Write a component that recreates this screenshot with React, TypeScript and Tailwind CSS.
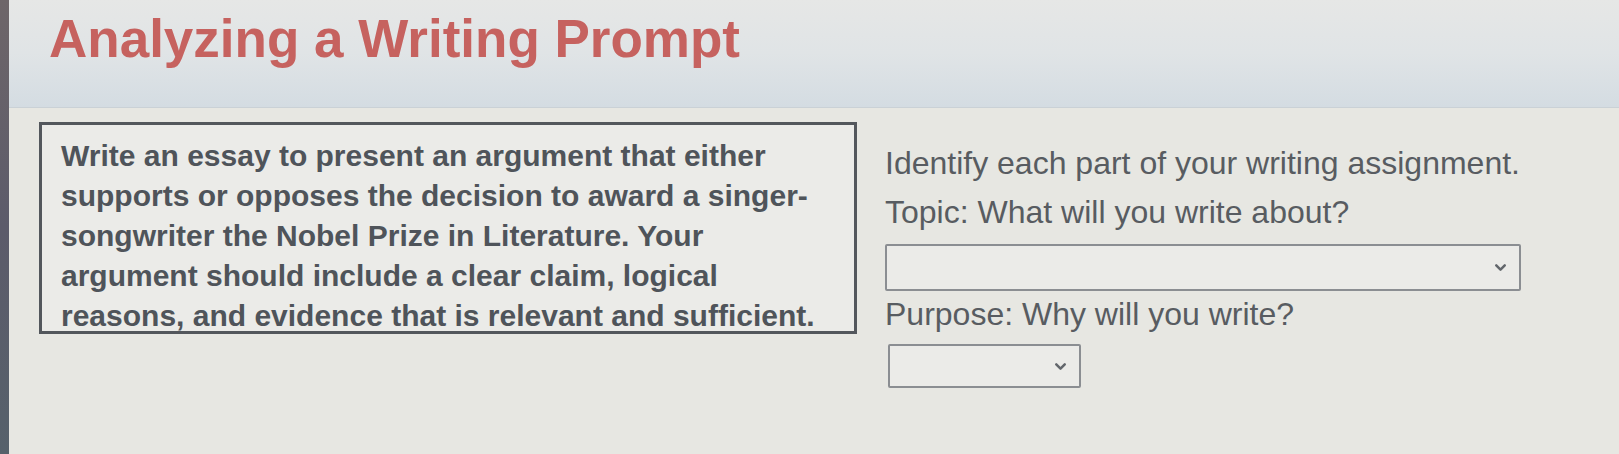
import { ChevronDown } from 'lucide-react'

const promptLines = [
  'Write an essay to present an argument that either',
  'supports or opposes the decision to award a singer-',
  'songwriter the Nobel Prize in Literature. Your',
  'argument should include a clear claim, logical',
  'reasons, and evidence that is relevant and sufficient.',
]

function Dropdown({ width, height }: { width: string; height: string }) {
  return (
    <div className={`${width} ${height} border-2 border-[#8b8e92] bg-[#ebebe8] rounded-[2px] flex items-center justify-end pr-[10px]`}>
      <ChevronDown className="w-[17px] h-[17px] text-[#62666b]" strokeWidth={3.5} />
    </div>
  )
}

export default function App() {
  return (
    <div className="flex w-[1619px] h-[454px] overflow-hidden bg-[#e7e7e2] font-['Liberation_Sans',Arial,sans-serif]">
      {/* screen bezel edge */}
      <div className="w-[9px] shrink-0 bg-gradient-to-b from-[#6e6669] via-[#5c5b6a] to-[#56616b]" />

      <div className="flex-1 flex flex-col">
        {/* Header */}
        <div className="h-[108px] shrink-0 bg-gradient-to-b from-[#e6e7e6] via-[#e0e4e6] to-[#d4dce2] border-b border-[#cad1d6] pl-[40px] pt-[12px]">
          <h1 className="text-[53px] leading-[53px] font-bold text-[#c6625f]">Analyzing a Writing Prompt</h1>
        </div>

        {/* Body */}
        <div className="flex gap-[28px] pl-[30px] pt-[14px]">
          <div className="w-[818px] h-[212px] shrink-0 border-[3px] border-[#53575c] bg-[#ebebe8] pl-[19px] pt-[11px]">
            {promptLines.map((line) => (
              <p key={line} className="text-[30px] leading-[40px] font-bold text-[#4f545a] whitespace-nowrap">
                {line}
              </p>
            ))}
          </div>

          <div className="flex flex-col pt-[21px] text-[#585c61]">
            <p className="text-[32px] leading-[40px] whitespace-nowrap">Identify each part of your writing assignment.</p>
            <p className="text-[32px] leading-[40px] mt-[9px] whitespace-nowrap">Topic: What will you write about?</p>
            <div className="mt-[12px]">
              <Dropdown width="w-[636px]" height="h-[47px]" />
            </div>
            <p className="text-[32px] leading-[40px] mt-[3px] whitespace-nowrap">Purpose: Why will you write?</p>
            <div className="mt-[10px] ml-[3px]">
              <Dropdown width="w-[193px]" height="h-[44px]" />
            </div>
          </div>
        </div>
      </div>
    </div>
  )
}
